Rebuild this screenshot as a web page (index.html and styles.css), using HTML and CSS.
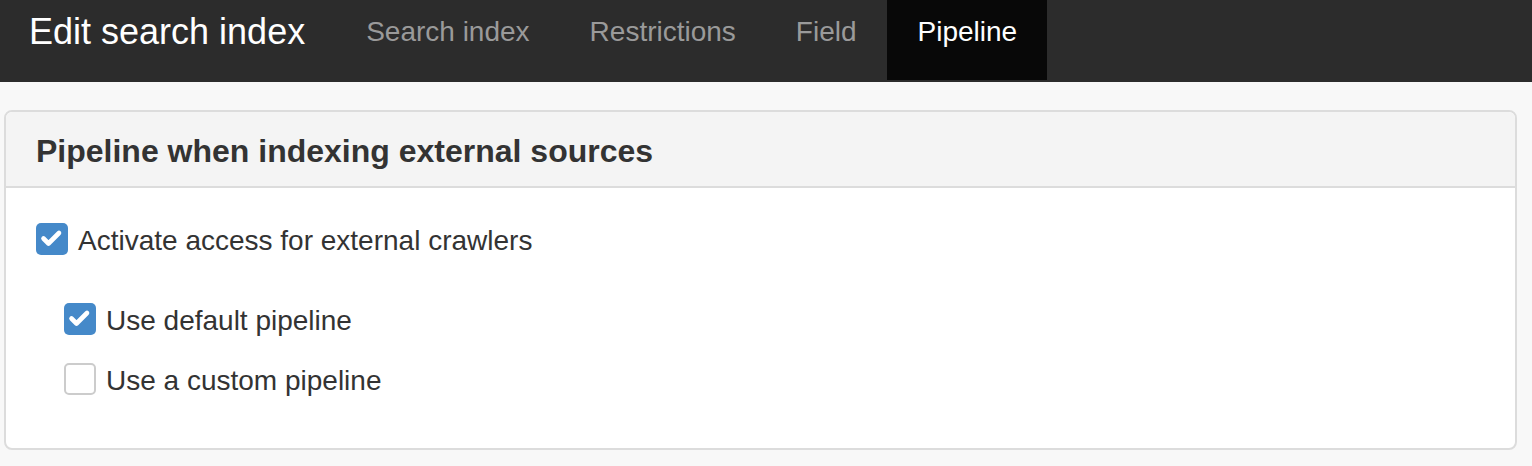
FILE: index.html
```html
<!DOCTYPE html>
<html lang="en">
<head>
<meta charset="utf-8">
<title>Edit search index</title>
<link rel="stylesheet" href="styles.css">
</head>
<body>
<nav class="navbar">
  <div class="brand">Edit search index</div>
  <ul class="nav">
    <li class="nav-item">Search index</li>
    <li class="nav-item">Restrictions</li>
    <li class="nav-item">Field</li>
    <li class="nav-item active">Pipeline</li>
  </ul>
</nav>
<main class="content">
  <section class="panel">
    <header class="panel-heading">
      <h2 class="panel-title">Pipeline when indexing external sources</h2>
    </header>
    <div class="panel-body">
      <label class="check-row">
        <span class="box checked"><svg viewBox="0 0 32 32" width="32" height="32"><path d="M7.5 15.5 L12.5 20.5 L23 10" fill="none" stroke="#fff" stroke-width="4.6" stroke-linecap="round" stroke-linejoin="round"/></svg></span>
        <span class="label-text">Activate access for external crawlers</span>
      </label>
      <div class="sub-group">
        <label class="check-row">
          <span class="box checked"><svg viewBox="0 0 32 32" width="32" height="32"><path d="M7.5 15.5 L12.5 20.5 L23 10" fill="none" stroke="#fff" stroke-width="4.6" stroke-linecap="round" stroke-linejoin="round"/></svg></span>
          <span class="label-text">Use default pipeline</span>
        </label>
        <label class="check-row">
          <span class="box"></span>
          <span class="label-text">Use a custom pipeline</span>
        </label>
      </div>
    </div>
  </section>
</main>
</body>
</html>
```

FILE: styles.css
```css
html, body {
  margin: 0;
  padding: 0;
}
body {
  background: #f8f8f8;
  font-family: "Liberation Sans", Arial, Helvetica, sans-serif;
  color: #333;
}
.navbar {
  display: flex;
  align-items: flex-start;
  height: 82px;
  background: #2c2c2c;
}
.brand {
  padding-left: 29px;
  padding-right: 31px;
  font-size: 36px;
  line-height: 63px;
  color: #fff;
}
.nav {
  display: flex;
  margin: 0;
  padding: 0;
  list-style: none;
}
.nav-item {
  height: 80px;
  padding: 0 30px 0 30px;
  font-size: 28px;
  line-height: 63px;
  color: #9a9a9a;
}
.nav-item.active {
  background: #080808;
  color: #fff;
  padding-left: 31px;
}
.content {
  padding: 28px 15px 16px 4px;
}
.panel {
  background: #fff;
  border: 2px solid #dcdcdc;
  border-radius: 8px;
  overflow: hidden;
}
.panel-heading {
  background: #f4f4f4;
  border-bottom: 2px solid #dcdcdc;
  padding: 21px 30px 17px 30px;
}
.panel-title {
  margin: 0;
  font-size: 32px;
  line-height: 36px;
  font-weight: bold;
  color: #333;
}
.panel-body {
  padding: 31px 30px 49px 30px;
}
.check-row {
  display: flex;
  align-items: center;
  gap: 10px;
  height: 40px;
  font-size: 28px;
  color: #333;
}
.label-text {
  padding-top: 3px;
}
.sub-group {
  margin-top: 40px;
  margin-left: 28px;
  display: flex;
  flex-direction: column;
  gap: 20px;
}
.box {
  box-sizing: border-box;
  width: 32px;
  height: 32px;
  border: 2px solid #cccccc;
  border-radius: 5px;
  background: #fff;
  flex: none;
  display: block;
}
.box.checked {
  border: none;
  background: #4589c9;
}
.box svg {
  display: block;
}
```
